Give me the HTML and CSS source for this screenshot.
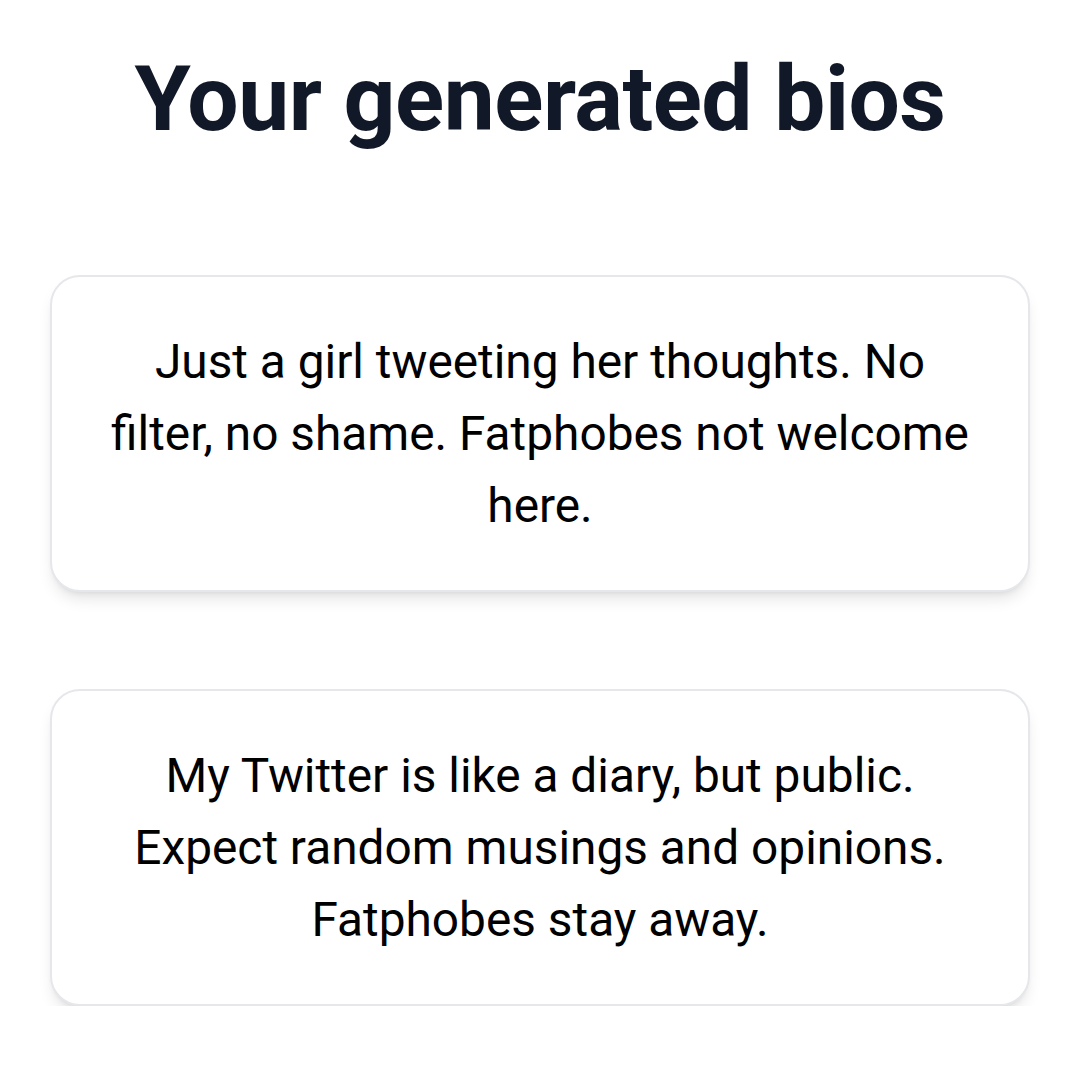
FILE: index.html
```html
<!DOCTYPE html>
<html lang="en">
<head>
<meta charset="utf-8">
<title>Your generated bios</title>
<link rel="stylesheet" href="styles.css">
</head>
<body>
<main class="page">
  <h1 class="title">Your generated bios</h1>
  <section class="bios">
    <div class="card"><p class="bio">Just a girl tweeting her thoughts. No filter, no shame. Fatphobes not welcome here.</p></div>
    <div class="card"><p class="bio">My Twitter is like a diary, but public. Expect random musings and opinions. Fatphobes stay away.</p></div>
  </section>
</main>
</body>
</html>
```
FILE: styles.css
```css
html, body {
  margin: 0;
  padding: 0;
  background: #ffffff;
}
body {
  font-family: Roboto, "Noto Sans", sans-serif;
}
.page {
  padding: 54px 50px 0;
  display: flex;
  flex-direction: column;
  align-items: stretch;
}
.title {
  margin: 0;
  font-size: 91px;
  line-height: 1;
  font-weight: 700;
  color: #111827;
  text-align: center;
  letter-spacing: -0.5px;
}
.bios {
  margin-top: 130px;
  display: flex;
  flex-direction: column;
  gap: 97px;
}
.card {
  border: 2px solid #e5e7eb;
  border-radius: 30px;
  background: #fff;
  padding: 49px 48px 48px;
  box-shadow: 0 10px 15px -3px rgba(0,0,0,0.1), 0 4px 6px -4px rgba(0,0,0,0.1);
}
.bio {
  margin: 0;
  font-size: 47.8px;
  line-height: 72px;
  color: #000;
  text-align: center;
}
```
